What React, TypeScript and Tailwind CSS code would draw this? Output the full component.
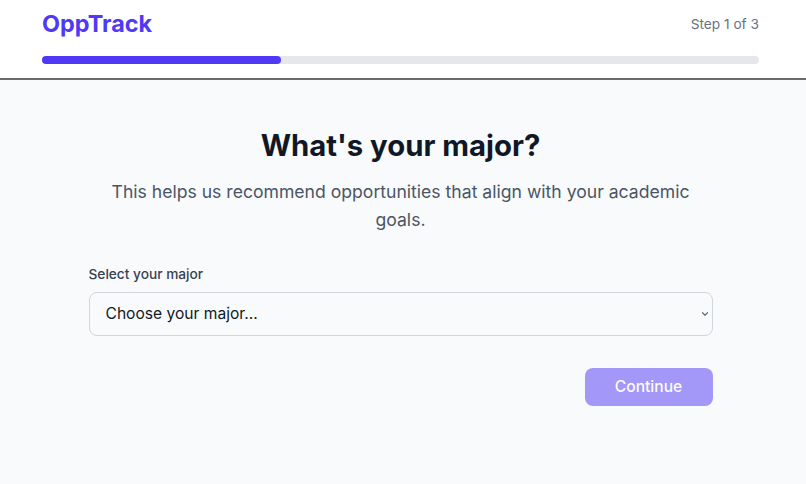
import React, { useState } from 'react';

const majors = ['Computer Science', 'Business', 'Engineering', 'Biology', 'Psychology', 'Economics'];

const App: React.FC = () => {
  const [major, setMajor] = useState<string>('');
  const step = 1;
  const totalSteps = 3;

  return (
    <div className="min-h-screen flex flex-col bg-gray-50 font-['Inter',sans-serif]">
      <header className="bg-white border-b-2 border-[#6b6b6b]">
        <div className="pl-[42px] pr-[47px] pt-2 pb-[14px]">
          <div className="flex items-center justify-between h-8">
            <span className="text-[23.4px] font-bold text-indigo-600">OppTrack</span>
            <span className="text-[13.7px] text-gray-500">
              Step {step} of {totalSteps}
            </span>
          </div>
          <div className="mt-4 h-2 w-full rounded-full bg-gray-200">
            <div className="h-2 rounded-full bg-indigo-600" style={{ width: `${(step / totalSteps) * 100}%` }} />
          </div>
        </div>
      </header>

      <main className="flex-1 pr-[5px]">
        <div className="mx-auto max-w-2xl px-6 pt-12 pb-12">
          <h1 className="text-[29.3px] leading-9 font-bold text-gray-900 text-center">What's your major?</h1>
          <p className="mt-[14px] text-[17.6px] leading-7 text-gray-600 text-center">
            This helps us recommend opportunities that align with your academic goals.
          </p>

          <div className="mt-[30px]">
            <label htmlFor="major" className="block text-[13.7px] leading-5 font-medium text-gray-700 mb-2">
              Select your major
            </label>
            <div className="relative">
              <select
                id="major"
                value={major}
                onChange={(e) => setMajor(e.target.value)}
                className="block w-full h-11 pl-4 pr-8 appearance-none rounded-lg border border-gray-300 bg-gray-50 text-[15.6px] text-gray-900"
              >
                <option value="">Choose your major...</option>
                {majors.map((m) => (
                  <option key={m} value={m}>
                    {m}
                  </option>
                ))}
              </select>
              <svg
                className="pointer-events-none absolute right-[4px] top-1/2 -translate-y-1/2 text-gray-500"
                width="8"
                height="6"
                viewBox="0 0 8 6"
                fill="none"
              >
                <path d="M1.5 1.8 L4 4.2 L6.5 1.8" stroke="currentColor" strokeWidth="1.3" strokeLinecap="round" strokeLinejoin="round" />
              </svg>
            </div>
          </div>

          <div className="mt-8 flex justify-end">
            <button
              disabled={!major}
              className="w-32 h-[38px] rounded-lg bg-indigo-600 text-white text-[15.6px] font-medium disabled:opacity-50"
            >
              Continue
            </button>
          </div>
        </div>
      </main>
    </div>
  );
};

export default App;
